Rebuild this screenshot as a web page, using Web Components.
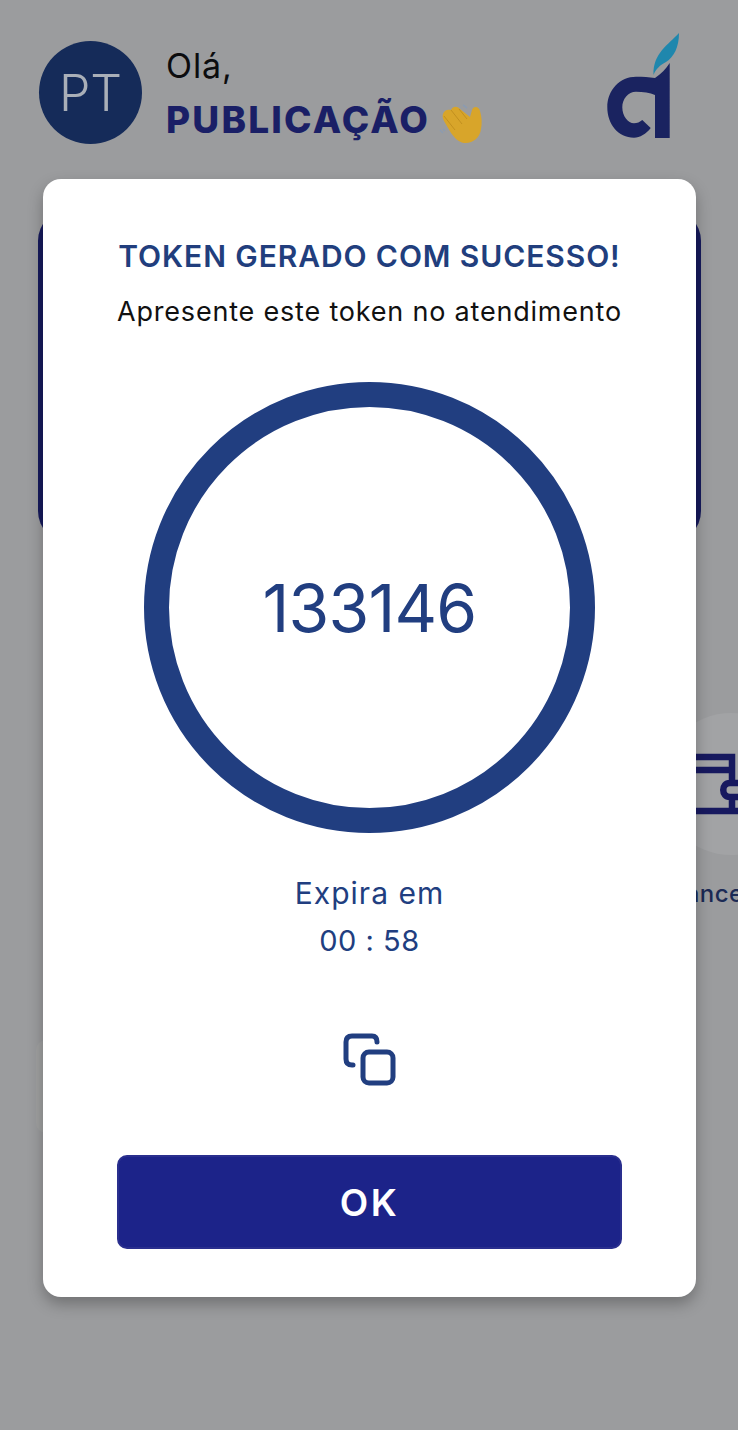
<!DOCTYPE html>
<html lang="pt">
<head>
<meta charset="utf-8">
<title>Token</title>
<style>
    html, body {
        margin: 0;
        padding: 0;
    }
    body {
        width: 738px;
        height: 1430px;
        overflow: hidden;
        font-family: "Inter", "Liberation Sans", sans-serif;
    }
</style>
</head>
<body>
<home-screen>
    <user-header slot="header" initials="PT" name="PUBLICAÇÃO"></user-header>
    <balance-banner slot="banner"></balance-banner>
    <shortcut-tile slot="tiles" label="Financeiro"></shortcut-tile>
    <quick-card slot="cards"></quick-card>
    <token-modal slot="modal" title="TOKEN GERADO COM SUCESSO!" hint="Apresente este token no atendimento" token="133146" time="00 : 58"></token-modal>
</home-screen>

<script>
class HomeScreen extends HTMLElement {
    connectedCallback() {
        this.attachShadow({mode: 'open'});
        this.shadowRoot.innerHTML = `
        <style>
            :host {
                display: block;
                position: relative;
                width: 738px;
                height: 1430px;
                overflow: hidden;
                background: #9b9c9e;
            }
            #content {
                display: flex;
                flex-direction: column;
                padding: 33px 0 0 38px;
            }
            #tiles {
                display: flex;
                margin: 170px 0 0 622px;
            }
            #cards {
                display: flex;
                margin-top: 132px;
            }
        </style>
        <div id="content">
            <slot name="header"></slot>
            <slot name="banner"></slot>
            <div id="tiles"><slot name="tiles"></slot></div>
            <div id="cards"><slot name="cards"></slot></div>
        </div>
        <slot name="modal"></slot>
        `;
    }
}

class UserHeader extends HTMLElement {
    connectedCallback() {
        this.attachShadow({mode: 'open'});
        this.shadowRoot.innerHTML = `
        <style>
            :host {
                display: flex;
                align-items: flex-start;
                width: 642px;
                height: 105px;
            }
            #avatar {
                flex: none;
                display: flex;
                align-items: center;
                justify-content: center;
                width: 103px;
                height: 103px;
                margin: 8px 24px 0 1px;
                border-radius: 50%;
                background: #152b59;
                color: #a9afb8;
                font-size: 50px;
                font-weight: 300;
            }
            #text {
                flex: 1;
                padding-top: 11px;
            }
            #hello {
                color: #0c0c0e;
                font-size: 34px;
                line-height: 44px;
                letter-spacing: 0.9px;
            }
            #name {
                display: flex;
                align-items: flex-start;
                gap: 8px;
                margin-top: 10px;
                color: #1a1f66;
                font-size: 37px;
                font-weight: 800;
                line-height: 44px;
                letter-spacing: 2.2px;
            }
            #wave {
                flex: none;
                margin-top: 4px;
            }
            #logo {
                flex: none;
            }
        </style>
        <div id="avatar">${this.getAttribute('initials')}</div>
        <div id="text">
            <div id="hello">Olá,</div>
            <div id="name">
                <span>${this.getAttribute('name')}</span>
                <svg id="wave" width="46" height="44" viewBox="0 0 46 44">
                    <path d="M5 12 C6 8 10 7 13 8 C15 4 19 4 22 7 L32 15 L34 8 C35 4 41 4 42 9 C44 15 44 22 43 27 C42 36 34 42 26 41 C20 40 16 35 13 31 L6 19 C5 17 4 14 5 12Z" fill="#d8a52a"/>
                    <path d="M13 8 L24 22 M21 7 L29 17 M6 14 L17 28" stroke="#c2901f" stroke-width="1" fill="none"/>
                    <path d="M25 3 L29 6 M2 28 L5 31 M5 27 L7 29" stroke="#8c9bb0" stroke-width="1.6" fill="none"/>
                </svg>
            </div>
        </div>
        <svg id="logo" width="74" height="106" viewBox="0 0 74 106">
            <path d="M73 0 C62 12 47 20 47.5 42 C50 36 54 32 60 29 C68 24 73 14 73 0Z" fill="#1f87ad"/>
            <path d="M63.7 30 V105 H49 V62 C44 59.5 37 58.7 30 58.7 C22 58.7 16.3 66 16.3 74.3 C16.3 83 22 90.3 28 90.3 C31 90.3 34 89 36.3 87 L44.7 95 C40 101 34 104.7 28 104.7 C12 104.7 1.3 91 1.3 74.3 C1.3 57 14 43.7 30 43.7 C37 43.7 43 44 49 45 C55 41 60 36 63.7 30Z" fill="#1a2360"/>
        </svg>
        `;
    }
}

class BalanceBanner extends HTMLElement {
    connectedCallback() {
        this.attachShadow({mode: 'open'});
        this.shadowRoot.innerHTML = `
        <style>
            :host {
                display: block;
                width: 663px;
                height: 334px;
                margin-top: 71px;
                border-radius: 32px;
                background: #161a5c;
            }
        </style>
        `;
    }
}

class ShortcutTile extends HTMLElement {
    connectedCallback() {
        this.attachShadow({mode: 'open'});
        this.shadowRoot.innerHTML = `
        <style>
            :host {
                flex: none;
                display: flex;
                flex-direction: column;
                align-items: center;
                gap: 24px;
                width: 142px;
                color: #1b2a55;
                font-size: 24px;
                font-weight: 500;
                letter-spacing: 0.5px;
            }
            #circle {
                display: flex;
                align-items: center;
                justify-content: center;
                width: 142px;
                height: 142px;
                border-radius: 50%;
                background: #a2a3a5;
            }
            #label {
                padding-right: 38px;
            }
        </style>
        <div id="circle">
            <svg width="72" height="62" viewBox="0 0 72 62" fill="none" stroke="#17195f" stroke-width="6.5">
                <path d="M0 4 H37 V17 M0 17 H37 V30 M46 30 H35 C26 30 26 44 35 44 H46 M37 44 V58 H0 M37 58 H46"/>
            </svg>
        </div>
        <div id="label">${this.getAttribute('label')}</div>
        `;
    }
}

class QuickCard extends HTMLElement {
    connectedCallback() {
        this.attachShadow({mode: 'open'});
        this.shadowRoot.innerHTML = `
        <style>
            :host {
                display: block;
                width: 140px;
                height: 93px;
                margin-left: -2px;
                border-radius: 10px;
                background: #a0a1a1;
            }
        </style>
        `;
    }
}

class TokenRing extends HTMLElement {
    connectedCallback() {
        this.attachShadow({mode: 'open'});
        this.shadowRoot.innerHTML = `
        <style>
            :host {
                display: flex;
                align-items: center;
                justify-content: center;
                box-sizing: border-box;
                width: 451px;
                height: 451px;
                border: 25px solid #213e80;
                border-radius: 50%;
                color: #213e80;
                font-size: 66px;
                font-weight: 400;
                letter-spacing: -0.8px;
            }
        </style>
        <slot></slot>
        `;
    }
}

class TokenModal extends HTMLElement {
    connectedCallback() {
        this.attachShadow({mode: 'open'});
        this.shadowRoot.innerHTML = `
        <style>
            :host {
                position: absolute;
                left: 43px;
                top: 179px;
                box-sizing: border-box;
                display: flex;
                flex-direction: column;
                align-items: center;
                width: 653px;
                height: 1118px;
                padding: 60px 74px 48px;
                border-radius: 18px;
                background: #ffffff;
                box-shadow: 0 7px 15px rgba(0, 0, 0, 0.28);
                text-align: center;
            }
            h1 {
                margin: 0;
                color: #213e7d;
                font-size: 30px;
                font-weight: 600;
                line-height: 34px;
                letter-spacing: 0.9px;
                white-space: nowrap;
            }
            p {
                margin: 23px 0 0;
                color: #111;
                font-size: 27px;
                line-height: 32px;
                letter-spacing: 0.8px;
                white-space: nowrap;
            }
            token-ring {
                margin-top: 54px;
            }
            #expires {
                margin-top: 37px;
                color: #213e80;
                font-size: 30px;
                line-height: 47px;
                letter-spacing: 1px;
            }
            #time {
                font-size: 29px;
                letter-spacing: 0.5px;
            }
            #copy {
                margin-top: 69px;
                flex: none;
            }
            button {
                box-sizing: border-box;
                width: 505px;
                height: 94px;
                margin-top: auto;
                border: 2px solid #2a2f8e;
                border-radius: 10px;
                background: #1c2389;
                color: #fff;
                font: 600 37px "Inter", "Liberation Sans", sans-serif;
                letter-spacing: 2.5px;
            }
        </style>
        <h1>${this.getAttribute('title')}</h1>
        <p>${this.getAttribute('hint')}</p>
        <token-ring>${this.getAttribute('token')}</token-ring>
        <div id="expires">Expira em<br><span id="time">${this.getAttribute('time')}</span></div>
        <svg id="copy" width="54" height="54" viewBox="0 0 54 54" fill="none" stroke="#213e80" stroke-width="5" stroke-linecap="round">
            <rect x="20" y="19" width="30" height="31" rx="6"/>
            <path d="M34 9 C34 5 32 3 29 3 H9 C5 3 3 5 3 9 V26 C3 30 5 32 9 32 H10"/>
        </svg>
        <button>OK</button>
        `;
    }
}

customElements.define('token-ring', TokenRing);
customElements.define('token-modal', TokenModal);
customElements.define('user-header', UserHeader);
customElements.define('balance-banner', BalanceBanner);
customElements.define('shortcut-tile', ShortcutTile);
customElements.define('quick-card', QuickCard);
customElements.define('home-screen', HomeScreen);
</script>
</body>
</html>
